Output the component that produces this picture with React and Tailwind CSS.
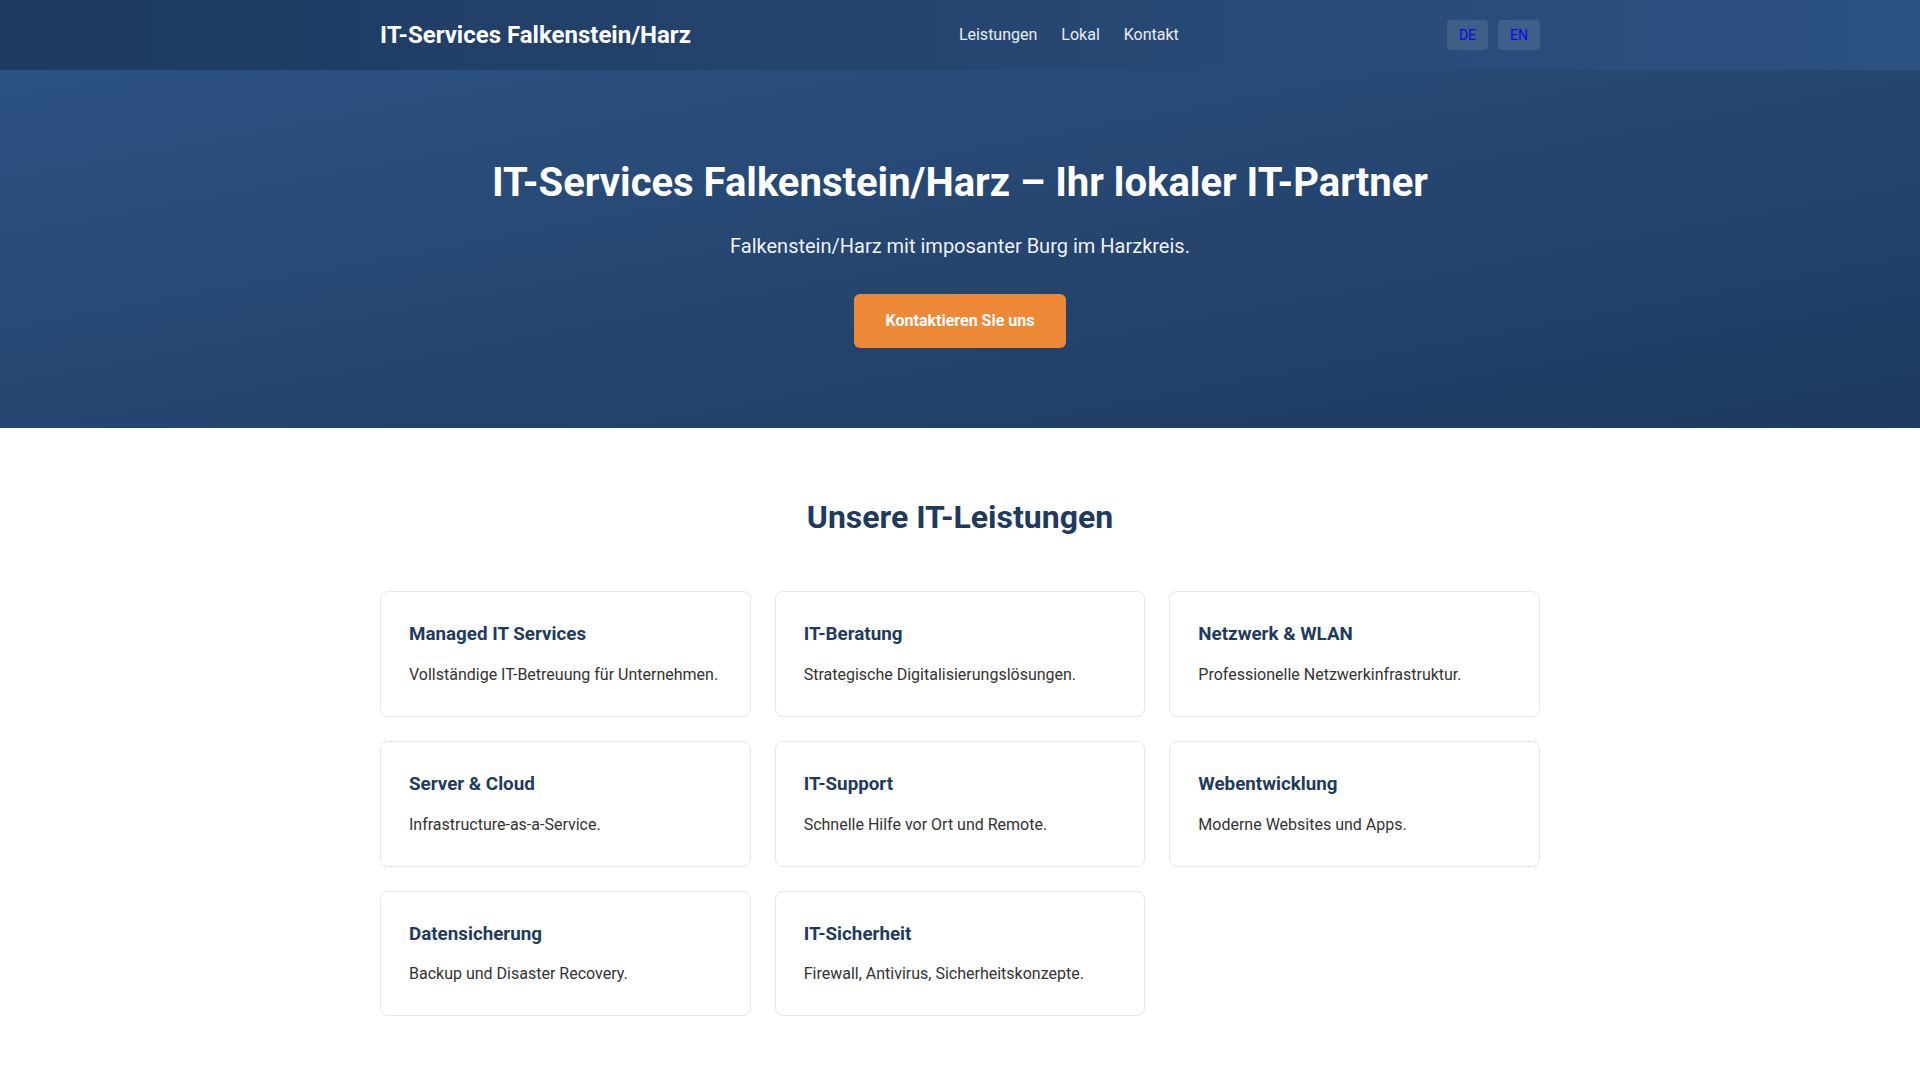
const services = [
  { title: "Managed IT Services", text: "Vollständige IT-Betreuung für Unternehmen." },
  { title: "IT-Beratung", text: "Strategische Digitalisierungslösungen." },
  { title: "Netzwerk & WLAN", text: "Professionelle Netzwerkinfrastruktur." },
  { title: "Server & Cloud", text: "Infrastructure-as-a-Service." },
  { title: "IT-Support", text: "Schnelle Hilfe vor Ort und Remote." },
  { title: "Webentwicklung", text: "Moderne Websites und Apps." },
  { title: "Datensicherung", text: "Backup und Disaster Recovery." },
  { title: "IT-Sicherheit", text: "Firewall, Antivirus, Sicherheitskonzepte." },
]

const App = () => {
  return (
    <div className="min-h-screen bg-white text-[#333] font-['Roboto',_'Liberation_Sans',_sans-serif] leading-normal">
      {/* Header */}
      <header className="bg-gradient-to-r from-[#1e3a5f] to-[#2c5282] h-[70px]">
        <div className="max-w-[1160px] mx-auto h-full flex items-center justify-between">
          <div className="text-2xl font-bold text-white">IT-Services Falkenstein/Harz</div>
          <nav className="flex gap-6 text-base text-white/90">
            <a href="#leistungen">Leistungen</a>
            <a href="#lokal">Lokal</a>
            <a href="#kontakt">Kontakt</a>
          </nav>
          <div className="flex gap-[10px]">
            <button className="bg-white/10 text-[#0a0aee] text-sm px-3 py-[5px] rounded">DE</button>
            <button className="bg-white/10 text-[#0a0aee] text-sm px-3 py-[5px] rounded">EN</button>
          </div>
        </div>
      </header>

      {/* Hero */}
      <section className="bg-gradient-to-br from-[#2c5282] to-[#1e3a5f] pt-[83px] pb-20 text-center text-white">
        <h1 className="text-[40px] leading-[60px] font-bold mb-[17px]">
          IT-Services Falkenstein/Harz – Ihr lokaler IT-Partner
        </h1>
        <p className="text-xl leading-8 text-white/95 mb-8">Falkenstein/Harz mit imposanter Burg im Harzkreis.</p>
        <a
          href="#kontakt"
          className="inline-block bg-[#ed8936] text-white font-bold text-base leading-6 px-8 py-[15px] rounded-md"
        >
          Kontaktieren Sie uns
        </a>
      </section>

      {/* Leistungen */}
      <section id="leistungen" className="pt-[65px] pb-16">
        <div className="max-w-[1160px] mx-auto">
          <h2 className="text-[32px] leading-[48px] font-bold text-[#1e3a5f] text-center mb-[50px]">
            Unsere IT-Leistungen
          </h2>
          <div className="grid grid-cols-3 gap-6">
            {services.map((s) => (
              <div key={s.title} className="bg-white border border-[#e2e8f0] rounded-lg px-7 pt-7 pb-[29px]">
                <h3 className="text-[18.8px] leading-[28.8px] font-bold text-[#1e3a5f] mb-[14px]">{s.title}</h3>
                <p className="text-base leading-6 text-[#333]">{s.text}</p>
              </div>
            ))}
          </div>
        </div>
      </section>
    </div>
  )
}

export default App
